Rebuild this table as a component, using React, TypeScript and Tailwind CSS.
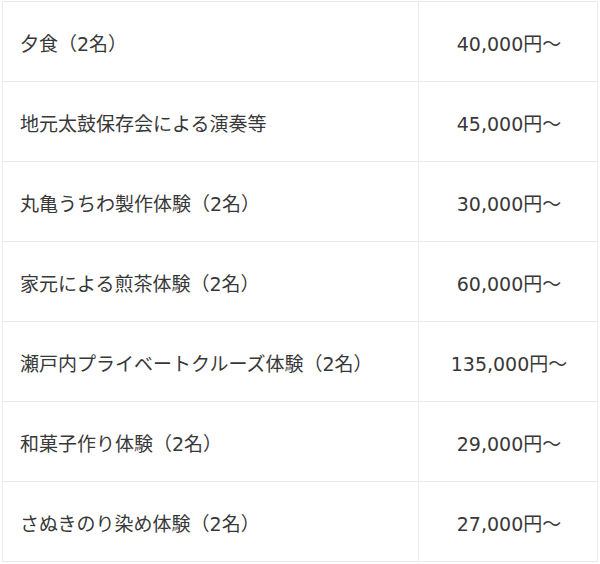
import React from "react";

const rows = [
  { name: "夕食（2名）", price: "40,000円～" },
  { name: "地元太鼓保存会による演奏等", price: "45,000円～" },
  { name: "丸亀うちわ製作体験（2名）", price: "30,000円～" },
  { name: "家元による煎茶体験（2名）", price: "60,000円～" },
  { name: "瀬戸内プライベートクルーズ体験（2名）", price: "135,000円～" },
  { name: "和菓子作り体験（2名）", price: "29,000円～" },
  { name: "さぬきのり染め体験（2名）", price: "27,000円～" },
];

export default function App() {
  return (
    <div
      className="w-[600px] h-[564px] bg-white pl-[2px] pt-[1px] text-[#383838]"
      style={{ fontFamily: '"DejaVu Sans", "Noto Sans CJK JP", sans-serif' }}
    >
      {/* price table */}
      <div className="w-[596px] border-[1.5px] border-[#ebebeb] border-b-0">
        {rows.map((row) => (
          <div
            key={row.name}
            className="grid grid-cols-[416px_1fr] h-[80px] border-b-[1.5px] border-[#ebebeb]"
          >
            <div className="flex items-center pl-[17px] pt-[5px] text-[19px] border-r-[1.5px] border-[#ebebeb]">
              {row.name}
            </div>
            <div className="flex items-center justify-center pl-[2px] pt-[5px] text-[19px]">
              {row.price}
            </div>
          </div>
        ))}
      </div>
    </div>
  );
}
